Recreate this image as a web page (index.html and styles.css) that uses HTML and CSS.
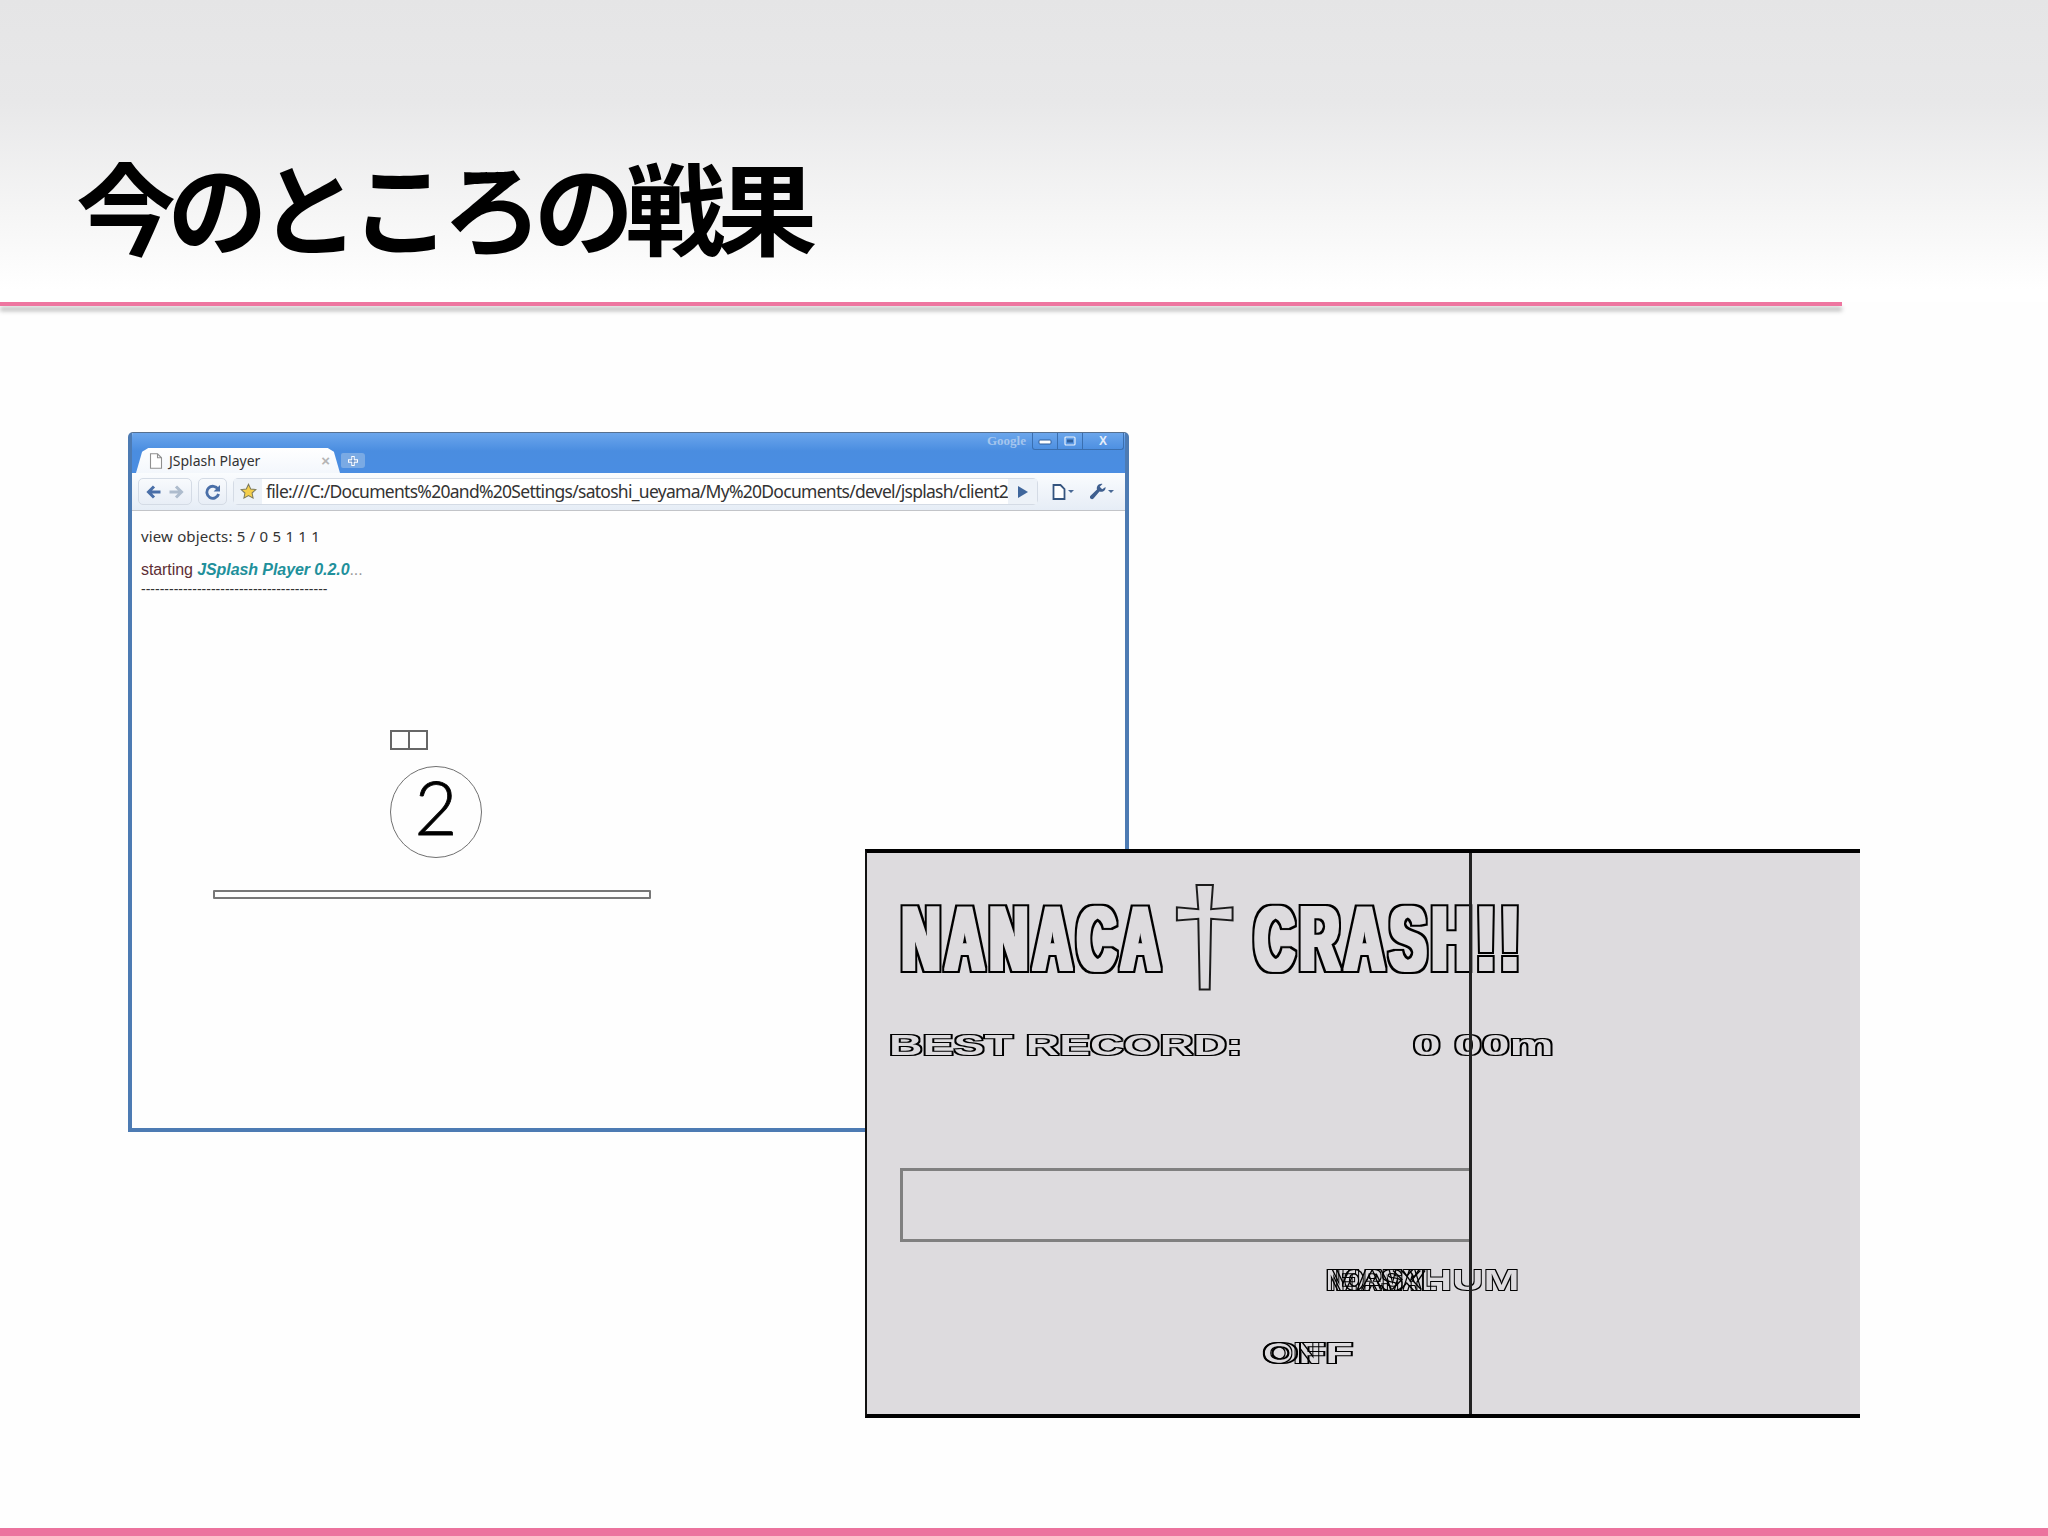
FILE: index.html
```html
<!DOCTYPE html>
<html lang="ja">
<head>
<meta charset="utf-8">
<title>今のところの戦果</title>
<link rel="stylesheet" href="styles.css">
</head>
<body>
<svg class="defs" aria-hidden="true">
  <filter id="outline-fat" x="-6%" y="-12%" width="112%" height="124%" color-interpolation-filters="sRGB">
    <feMorphology in="SourceAlpha" operator="dilate" radius="5 1" result="inner"/>
    <feMorphology in="inner" operator="dilate" radius="3 2" result="outer"/>
    <feComposite in="outer" in2="inner" operator="out"/>
  </filter>
  <filter id="outline-wide" x="-6%" y="-20%" width="112%" height="140%" color-interpolation-filters="sRGB">
    <feMorphology in="SourceAlpha" operator="dilate" radius="1 1" result="outer"/>
    <feComposite in="outer" in2="SourceAlpha" operator="out"/>
  </filter>
</svg>
<div class="slide">
  <header class="slide-head"><h1 class="slide-title">今のところの戦果</h1></header>
  <div class="slide-rule"></div>
  <main class="slide-body">
    <section class="browser">
      <div class="titlebar">
        <div class="tab">
          <svg class="tab-page" viewBox="0 0 14 16"><path d="M1.500 .8h7l4 4v10.400h-11z M8.500 .8v4h4" fill="#fff" stroke="#8f8f8f" stroke-width="1.100"/></svg>
          <span class="tab-label">JSplash Player</span>
          <span class="tab-close">×</span>
        </div>
        <div class="tab-new"><svg viewBox="0 0 12 12" width="12" height="12"><path d="M6 1v10M1 6h10" stroke="#fff" stroke-width="3.400"/><path d="M6 2v8M2 6h8" stroke="#4a7cc0" stroke-width="1.200"/></svg></div>
        <span class="google">Google</span>
        <div class="winctl">
          <span class="winbtn winbtn-min"><svg viewBox="0 0 14 8" width="14" height="8"><rect x="1" y="3" width="12" height="4" rx="1" fill="#fff" stroke="#2f5f9c"/></svg></span>
          <span class="winbtn winbtn-max"><svg viewBox="0 0 12 10" width="12" height="10"><rect x="1" y="1" width="10" height="8" rx="1" fill="none" stroke="#e8f0fa" stroke-width="1.200"/><rect x="3" y="3.500" width="6" height="3" fill="#2f5f9c"/></svg></span>
          <span class="winbtn winbtn-close">X</span>
        </div>
      </div>
      <div class="toolbar">
        <div class="tbtn tbtn-nav">
          <svg viewBox="0 0 16 14" width="16" height="14"><path d="M14.500 7H3M8 1.500 2.500 7 8 12.500" fill="none" stroke="#4a6fa8" stroke-width="3"/></svg>
          <svg viewBox="0 0 16 14" width="16" height="14"><path d="M1.500 7H13M8 1.500 13.500 7 8 12.500" fill="none" stroke="#aebccd" stroke-width="3"/></svg>
        </div>
        <div class="tbtn tbtn-reload">
          <svg viewBox="0 0 16 16" width="16" height="16"><path d="M13 5.200A6 6 0 1 0 13.600 10" fill="none" stroke="#4a6fa8" stroke-width="2.800"/><path d="M15 1v6.500H8.600z" fill="#4a6fa8"/></svg>
        </div>
        <div class="omnibox">
          <span class="omni-star"><svg viewBox="0 0 20 20" width="17" height="17"><path d="M10 1.500l2.600 5.500 6 .7-4.400 4.100 1.200 6L10 14.900l-5.400 2.900 1.200-6L1.400 7.700l6-.7z" fill="#f5cf4c" stroke="#7d7a5a" stroke-width="1.200"/></svg></span>
          <span class="omni-url">file:///C:/Documents%20and%20Settings/satoshi_ueyama/My%20Documents/devel/jsplash/client2</span>
          <span class="omni-go"><svg viewBox="0 0 10 12" width="10" height="12"><path d="M0 0l10 6-10 6z" fill="#3f669c"/></svg></span>
        </div>
        <div class="tool-icons">
          <span class="tool"><svg viewBox="0 0 14 16" width="14" height="16"><path d="M1.500 1h7l4 4v10h-11z" fill="#fff" stroke="#35557f" stroke-width="1.800"/></svg><i class="caret"></i></span>
          <span class="tool"><svg viewBox="0 0 18 18" width="18" height="18"><path d="M17.500 4c.5 3.500-3 5.800-6 4.500L5.500 15.500c-1.800 2-4.800-.6-3-2.700L9 6.500C8 3.500 11 0 14.500 1l-2.800 2.800 2.500 2.500z" fill="#3f5f8f"/></svg><i class="caret"></i></span>
        </div>
      </div>
      <div class="page">
        <p class="log-objects">view objects: 5 / 0 5 1 1 1</p>
        <p class="log-start">starting <em class="log-name">JSplash Player 0.2.0</em><span class="log-dots">...</span></p>
        <p class="log-rule">----------------------------------------</p>
        <div class="stage-pair"><span></span><span></span></div>
        <div class="stage-ball">2</div>
        <div class="stage-bar"></div>
      </div>
    </section>

    <section class="game">
      <span class="gt gt-logo gt-nanaca">NANACA</span>
      <span class="gt gt-dagger">†</span>
      <span class="gt gt-logo gt-crash">CRASH!!</span>
      <span class="gt gt-wide gt-best">BEST RECORD:</span>
      <span class="gt gt-wide gt-score">0 00m</span>
      <div class="game-box"></div>
      <span class="gt gt-wide gt-lvl-a">MAXHUM</span>
      <span class="gt gt-wide gt-lvl-b">NORMAL</span>
      <span class="gt gt-wide gt-lvl-c">EASY</span>
      <span class="gt gt-wide gt-off">OFF</span>
      <span class="gt gt-wide gt-on">ON</span>
      <div class="game-line"></div>
    </section>
  </main>
  <footer class="slide-foot"></footer>
</div>
</body>
</html>
```
FILE: styles.css
```css
* { box-sizing: border-box; }
html, body { margin: 0; padding: 0; background: #fff; }
.defs { position: absolute; width: 0; height: 0; }
.slide { width: 2048px; height: 1536px; display: flex; flex-direction: column; overflow: hidden; background: #fefefe; }

.slide-head { height: 302px; padding: 155px 0 0 76px; background: linear-gradient(#e5e5e6 0, #e8e8e9 34%, #f6f6f6 72%, #ffffff 96%); }
.slide-title { margin: 0; font: 700 100px/1 "Noto Sans CJK JP", sans-serif; letter-spacing: -8.400px; color: #000; white-space: nowrap; }
.slide-rule { width: 1842px; height: 4px; flex: none; background: #ee76a0; box-shadow: 0 5px 4px rgba(80,80,80,.4); }
.slide-body { flex: 1; position: relative; }
.slide-foot { height: 8px; flex: none; background: #ec739e; }

/* windows sit on a free canvas */
.browser { position: absolute; left: 128px; top: 126px; width: 1001px; height: 700px; display: flex; flex-direction: column; border: 4px solid #4d7bb3; border-top: 1px solid #56708f; border-radius: 5px 5px 0 0; background: #fefefe; overflow: hidden; }
.titlebar { height: 40px; flex: none; position: relative; display: flex; align-items: flex-end; padding-left: 4px; background: linear-gradient(#6ba6ec, #4a8de0 45%, #4a8de2); }
.tab { width: 204px; height: 25px; display: flex; align-items: center; padding: 0 10px 0 13px; background: linear-gradient(#fff, #f3f7fc); border-radius: 6px 8px 0 0; clip-path: polygon(0 100%, 3% 15%, 6% 0, 94% 0, 97% 15%, 100% 100%); }
.tab-page { width: 14px; height: 16px; flex: none; }
.tab-label { margin-left: 6px; font: 14px/1 "Noto Sans", sans-serif; color: #333; white-space: nowrap; flex: 1; }
.tab-close { font: 700 15px/1 "Liberation Sans", sans-serif; color: #b5b5b5; }
.tab-new { width: 24px; height: 15px; margin: 0 0 5px 1px; display: flex; align-items: center; justify-content: center; background: #7aaae4; border-radius: 2px 3px 3px 2px; }
.google { position: absolute; left: 855px; top: 0; font: 700 13px/1.200 "Liberation Serif", serif; color: #a5c6ee; }
.winctl { position: absolute; right: 1px; top: 0; height: 17px; display: flex; border: 1px solid #3a6fb0; border-top: 0; border-radius: 0 0 3px 3px; }
.winbtn { display: flex; align-items: center; justify-content: center; height: 100%; border-right: 1px solid #3a6fb0; }
.winbtn-min { width: 25px; }
.winbtn-max { width: 25px; }
.winbtn-close { width: 40px; border-right: 0; font: 700 12px/1 "Liberation Sans", sans-serif; color: #e6eefa; }

.toolbar { height: 38px; flex: none; display: flex; align-items: center; padding: 0 0 0 6px; gap: 6px; background: linear-gradient(#fafcfe, #e6edf6); border-bottom: 1px solid #c2c4c8; }
.tbtn { height: 27px; display: flex; align-items: center; justify-content: center; background: linear-gradient(#f8fafd, #e8eef6); border: 1px solid #d4dbe5; border-radius: 5px; }
.tbtn-nav { width: 54px; gap: 6px; }
.tbtn-reload { width: 29px; }
.omnibox { width: 805px; height: 27px; display: flex; align-items: center; background: #fff; border: 1px solid #d4dbe5; border-radius: 5px; }
.omni-star { width: 28px; height: 100%; flex: none; display: flex; align-items: center; justify-content: center; background: #edf2f8; }
.omni-url { flex: 1; min-width: 0; overflow: hidden; white-space: nowrap; padding-left: 4px; font: 17.500px/1.300 "Noto Sans", sans-serif; color: #333; letter-spacing: -.72px; }
.omni-go { width: 29px; height: 100%; flex: none; display: flex; align-items: center; justify-content: center; background: #edf2f8; }
.tool-icons { display: flex; gap: 14px; margin-left: 8px; }
.tool { display: flex; align-items: center; gap: 2px; }
.caret { width: 0; height: 0; border: 3px solid transparent; border-top: 3px solid #4a6a96; border-bottom: 0; }

.page { flex: 1; position: relative; padding: 15px 0 0 9px; background: #fefefe; }
.page p { margin: 0; white-space: nowrap; }
.log-objects { font: 15px/20px "Noto Sans", sans-serif; letter-spacing: .12px; word-spacing: .2px; color: #333; }
.log-start { margin-top: 14px !important; font: 16px/20px "Liberation Sans", sans-serif; letter-spacing: -.08px; color: #5d2e35; }
.log-name { font-weight: 700; color: #21909b; }
.log-dots { color: #9a9a9a; }
.log-rule { margin-top: 2px !important; font: 14px/14px "Liberation Sans", sans-serif; color: #333; }

.stage-pair { position: absolute; left: 258px; top: 219px; width: 38px; height: 20px; display: flex; border: 2px solid #666; }
.stage-pair span { flex: 1; }
.stage-pair span + span { border-left: 2px solid #666; }
.stage-ball { position: absolute; left: 258px; top: 255px; width: 92px; height: 92px; padding-bottom: 10px; display: flex; align-items: center; justify-content: center; border: 1.500px solid #707070; border-radius: 50%; font: 300 74px/1 "Lato", sans-serif; -webkit-text-stroke: .8px #000; color: #000; }
.stage-bar { position: absolute; left: 81px; top: 379px; width: 438px; height: 9px; background: #fdfdfd; border: 2px solid #777; border-radius: 1px; }

.game { position: absolute; left: 865px; top: 543px; width: 995px; height: 569px; background: #dddbde; border-top: 4px solid #000; border-bottom: 4px solid #000; border-left: 2px solid #111; }
.gt { position: absolute; white-space: nowrap; line-height: 1; color: #000; font-family: "Liberation Sans", sans-serif; font-weight: 700; transform-origin: 0 50%; }
.gt-logo { font-size: 90px; letter-spacing: 10px; filter: url(#outline-fat); }
.gt-nanaca { left: 35px; top: 41px; transform: scaleX(.585); }
.gt-crash { left: 388px; top: 41px; transform: scaleX(.6); }
.gt-dagger { left: 301px; top: 17px; font-size: 132px; color: transparent; -webkit-text-stroke: 2px #1c1c1c; }
.gt-wide { font-size: 29px; filter: url(#outline-wide); }
.gt-best { left: 22px; top: 178px; transform: scaleX(1.600); }
.gt-score { left: 546px; top: 178px; transform: scaleX(1.710); }
.game-box { position: absolute; left: 33px; top: 315px; width: 570px; height: 74px; border: 3px solid #808080; border-right: 0; }
.gt-lvl-a { left: 458px; top: 413px; transform: scaleX(1.490); }
.gt-lvl-b { left: 459px; top: 413px; transform: scaleX(.87); }
.gt-lvl-c { left: 468px; top: 413px; transform: scaleX(1.140); }
.gt-off { left: 396px; top: 486px; transform: scaleX(1.550); }
.gt-on { left: 396px; top: 486px; transform: scaleX(1.330); }
.game-line { position: absolute; left: 602px; top: 0; width: 3px; height: 100%; background: #222; }
```
